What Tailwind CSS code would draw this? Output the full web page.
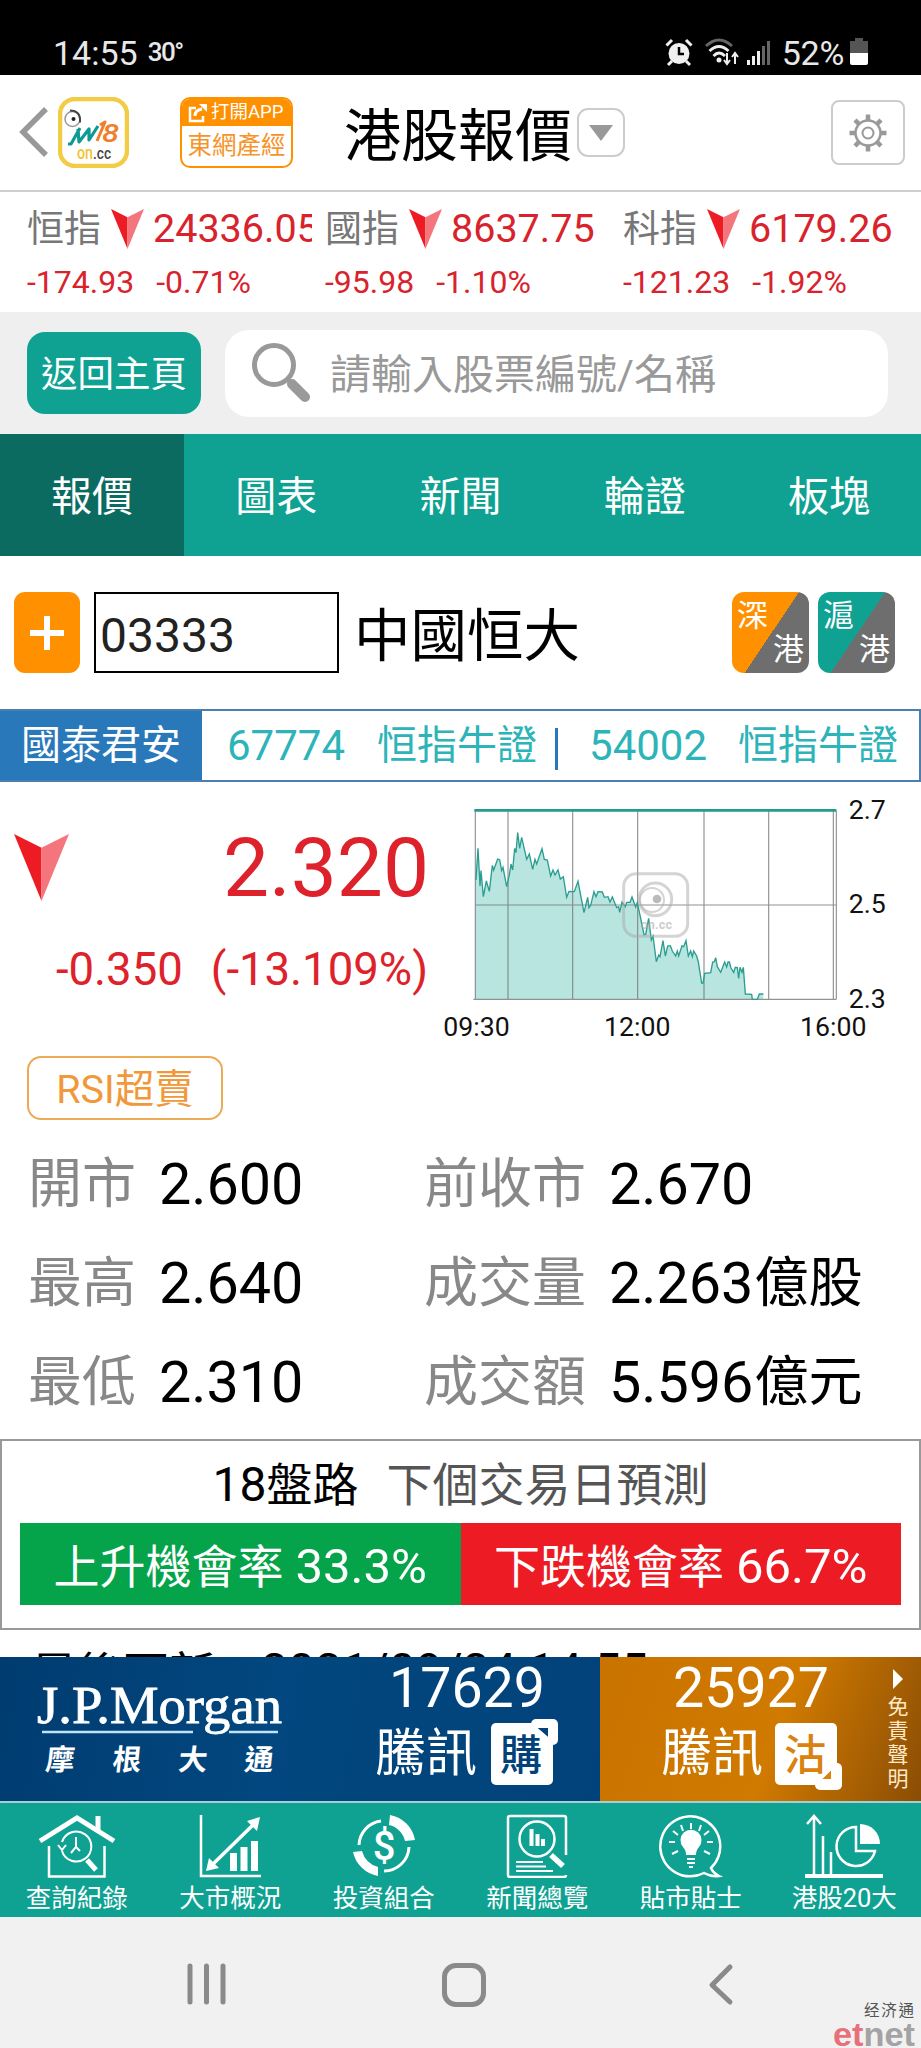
<!DOCTYPE html>
<html lang="zh-Hant">
  <head>
    <meta charset="utf-8" />
    <title>港股報價</title>
    <script src="https://cdn.jsdelivr.net/npm/@tailwindcss/browser@4"></script>
  </head>
  <body class="bg-white">
    <div
      class="relative w-[921px] h-[2048px] overflow-hidden flex flex-col whitespace-nowrap leading-none text-black font-['Roboto','Noto_Sans_CJK_TC',sans-serif]"
    >
      <!-- Status bar -->
      <div class="h-[75px] shrink-0 bg-black text-[#e8e8e8] flex items-start pt-9 pl-[53px] pr-[53px]">
        <span class="text-[34px]">14:55</span>
        <span class="ml-2.5 mt-[3px] text-[26px] font-medium tracking-[-1.5px]">30°</span>
        <div class="ml-auto flex items-start">
          <svg class="w-7 h-8 mt-0.5" viewBox="0 0 28 32">
            <circle cx="14" cy="15.500" r="10.500" fill="#f0f0f0" />
            <path d="M14 9v7h5" fill="none" stroke="#000" stroke-width="2.500" />
            <path d="M1.500 7.500L7 2M26.500 7.500L21 2M7 23l-4 4M21 23l4 4" stroke="#f0f0f0" stroke-width="3" />
          </svg>
          <svg class="w-9 h-8 ml-3 mt-0.5" viewBox="0 0 36 32" fill="none" stroke-width="2.800">
            <path d="M1 8Q14-4 27 8" stroke="#666" />
            <path d="M4.500 13Q14 4 23.500 13M8.500 18Q14 12 20 18" stroke="#eee" />
            <circle cx="14" cy="22" r="2.500" fill="#eee" />
            <path d="M22 15v10M19 22l3 4 3-4M30 26V16M27 19l3-4 3 4" stroke="#eee" stroke-width="2" />
          </svg>
          <svg class="w-6 h-8 ml-1.5 mt-0.5" viewBox="0 0 24 32">
            <path d="M0 22h3v5H0zM5 18h3v9H5zM10 13h3v14h-3z" fill="#eee" />
            <path d="M15 8h3v19h-3zM20 3h3v24h-3z" fill="#666" />
          </svg>
          <span class="ml-[11px] text-[34px] tracking-[-0.3px]">52%</span>
          <svg class="w-[18px] h-8 ml-1.5 mt-0.5" viewBox="0 0 18 32">
            <path d="M5 0h8v3h5v13H0V3h5z" fill="#555" />
            <path d="M0 15h18v10q0 2-2 2H2q-2 0-2-2z" fill="#fff" />
          </svg>
        </div>
      </div>

      <!-- Header -->
      <div class="h-[117px] shrink-0 border-b-2 border-[#cfcfcf] flex items-start pt-[22px] pl-[18px] pr-4">
        <svg class="w-[30px] h-[50px] mt-[10px]" viewBox="0 0 30 50" fill="none" stroke="#999" stroke-width="5.500">
          <path d="M28 2L5 25l23 23" />
        </svg>
        <svg class="w-[71px] h-[71px] ml-[10px]" viewBox="0 0 71 71">
          <rect x="2" y="2" width="67" height="67" rx="15" fill="#fff" stroke="#f3cc45" stroke-width="4.500" />
          <circle cx="14.500" cy="22" r="7.500" fill="#fff" stroke="#999" stroke-width="1.500" />
          <path d="M12 13.500q11 0 10 12" fill="none" stroke="#444" stroke-width="2" />
          <circle cx="15.500" cy="22" r="2" fill="#222" />
          <path d="M10 47h3L22 31M20 32l1 13L31 32l0 11 9-14" fill="none" stroke="#0d9a94" stroke-width="3.200" stroke-linejoin="round" />
          <path d="M39 44l8-19-5 3" fill="none" stroke="#f07e2c" stroke-width="3" stroke-linejoin="round" />
          <text x="44" y="45" font-size="26" font-style="italic" font-weight="500" fill="#f07e2c" textLength="17" lengthAdjust="spacingAndGlyphs">8</text>
          <text x="19" y="62" font-size="18" font-weight="500" fill="#f0c435" textLength="16" lengthAdjust="spacingAndGlyphs">on</text>
          <text x="35" y="62" font-size="16" font-weight="500" fill="#444" textLength="18" lengthAdjust="spacingAndGlyphs">.cc</text>
        </svg>
        <div class="ml-[51px] w-[113px] h-[71px] rounded-[10px] border-2 border-[#ff9000] overflow-hidden flex flex-col">
          <div class="h-[27px] bg-[#ff9000] text-white text-[18.500px] flex items-center pl-1.5 gap-[3px]">
            <svg class="w-5 h-5" viewBox="0 0 20 20" fill="none" stroke="#fff" stroke-width="2.500">
              <path d="M8 5H2v13h13v-5" />
              <path d="M7 13q0-6 7-7" stroke-width="3" />
              <path d="M11 1h8v8z" fill="#fff" stroke="none" />
            </svg>
            <span>打開APP</span>
          </div>
          <div class="flex-1 flex items-center justify-center text-[24.500px] text-[#f5942a]">東網產經</div>
        </div>
        <div class="ml-[51px] mt-[11px] text-[57px]">港股報價</div>
        <div class="ml-[5px] mt-[11px] w-[48px] h-[49px] rounded-[11px] border-2 border-[#ccc] flex items-center justify-center">
          <svg class="w-6 h-4" viewBox="0 0 24 16"><path d="M0 0h24L12 16z" fill="#999" /></svg>
        </div>
        <div class="ml-auto mt-[3px] w-[74px] h-[65px] rounded-lg border-2 border-[#ccc] flex items-center justify-center">
          <svg class="w-10 h-10" viewBox="0 0 40 40" fill="none" stroke="#999">
            <circle cx="20" cy="20" r="12.500" stroke-width="2.500" />
            <circle cx="20" cy="20" r="5.500" stroke-width="2" />
            <path d="M20 7V1.500M20 33v5.500M7 20H1.500M33 20h5.500M10.800 10.800L7 7M29.200 29.200L33 33M29.200 10.800L33 7M10.800 29.200L7 33" stroke-width="4.500" />
          </svg>
        </div>
      </div>

      <!-- Index ticker -->
      <div class="h-[120px] shrink-0 flex gap-[13px] pl-[27px] text-[#d8232c]">
        <div class="w-[285px] overflow-hidden">
          <div class="flex h-[46px] mt-[14px] items-center">
            <span class="text-[37px] text-[#777]">恒指</span>
            <svg class="w-[33px] h-[42px] ml-2.5 shrink-0" viewBox="0 0 56 68"><path d="M0 0l28 14v54z" fill="#ed1c24" /><path d="M56 0L28 14v54z" fill="#f4767c" /></svg>
            <span class="ml-[9px] text-[39.500px]">24336.05</span>
          </div>
          <div class="mt-[14px] text-[32px] flex gap-[22px]"><span>-174.93</span><span>-0.71%</span></div>
        </div>
        <div class="w-[285px] overflow-hidden">
          <div class="flex h-[46px] mt-[14px] items-center">
            <span class="text-[37px] text-[#777]">國指</span>
            <svg class="w-[33px] h-[42px] ml-2.5 shrink-0" viewBox="0 0 56 68"><path d="M0 0l28 14v54z" fill="#ed1c24" /><path d="M56 0L28 14v54z" fill="#f4767c" /></svg>
            <span class="ml-[9px] text-[39.500px]">8637.75</span>
          </div>
          <div class="mt-[14px] text-[32px] flex gap-[22px]"><span>-95.98</span><span>-1.10%</span></div>
        </div>
        <div class="w-[285px] overflow-hidden">
          <div class="flex h-[46px] mt-[14px] items-center">
            <span class="text-[37px] text-[#777]">科指</span>
            <svg class="w-[33px] h-[42px] ml-2.5 shrink-0" viewBox="0 0 56 68"><path d="M0 0l28 14v54z" fill="#ed1c24" /><path d="M56 0L28 14v54z" fill="#f4767c" /></svg>
            <span class="ml-[9px] text-[39.500px]">6179.26</span>
          </div>
          <div class="mt-[14px] text-[32px] flex gap-[22px]"><span>-121.23</span><span>-1.92%</span></div>
        </div>
      </div>

      <!-- Search -->
      <div class="h-[122px] shrink-0 bg-[#efefef] flex items-center pl-[27px]">
        <div class="w-[174px] h-[82px] rounded-[18px] bg-[#0fa292] text-white text-[36.500px] pt-1 flex items-center justify-center">返回主頁</div>
        <div class="ml-6 w-[663px] h-[87px] rounded-[24px] bg-white flex items-center pl-[26px] text-[#999]">
          <svg class="w-[61px] h-[60px]" viewBox="0 0 61 60" fill="none" stroke="#999">
            <circle cx="23" cy="22" r="19.500" stroke-width="5" />
            <path d="M41 41l13 13" stroke-width="10" stroke-linecap="round" />
          </svg>
          <span class="ml-[18px] mt-[5px] text-[41px]">請輸入股票編號/名稱</span>
        </div>
      </div>

      <!-- Tabs -->
      <div class="h-[122px] shrink-0 bg-[#0fa292] text-white text-[41px] grid grid-cols-5">
        <div class="bg-[#0b6b61] pt-[5px] flex items-center justify-center">報價</div>
        <div class="pt-[5px] flex items-center justify-center">圖表</div>
        <div class="pt-[5px] flex items-center justify-center">新聞</div>
        <div class="pt-[5px] flex items-center justify-center">輪證</div>
        <div class="pt-[5px] flex items-center justify-center">板塊</div>
      </div>

      <!-- Stock code -->
      <div class="h-[153px] shrink-0 flex items-center pl-[14px] pr-[26px]">
        <div class="w-[66px] h-[81px] rounded-[11px] bg-[#ff9000] flex items-center justify-center">
          <svg class="w-[34px] h-[34px]" viewBox="0 0 34 34"><path d="M17 0v34M0 17h34" stroke="#fff" stroke-width="6" /></svg>
        </div>
        <div class="ml-[14px] w-[245px] h-[81px] border-2 border-black flex items-center pl-1 pt-1.5 text-[48px] text-[#222]">03333</div>
        <div class="ml-[15px] mt-[9px] text-[56.500px]">中國恒大</div>
        <div class="ml-auto flex gap-[9px] text-white text-[31px]">
          <div class="w-[77px] h-[81px] rounded-xl bg-linear-[124deg,#ff9000_51%,#6e6e6e_51%] flex flex-col justify-between px-[5px] py-2">
            <span>深</span><span class="self-end">港</span>
          </div>
          <div class="w-[77px] h-[81px] rounded-xl bg-linear-[124deg,#0fa292_51%,#6e6e6e_51%] flex flex-col justify-between px-[5px] py-2">
            <span>滬</span><span class="self-end">港</span>
          </div>
        </div>
      </div>

      <!-- Sponsored strip -->
      <div class="h-[73px] shrink-0 border-2 border-l-0 border-[#4a7faf] flex items-center text-[40px] text-[#2cb4b8]">
        <div class="w-[202px] h-full bg-[#2878ba] text-white flex items-center justify-center">國泰君安</div>
        <span class="ml-[25px] text-[42px]">67774</span>
        <span class="ml-[32px]">恒指牛證</span>
        <span class="ml-[18px] w-[3px] h-[42px] mt-1.5 bg-[#2878ba]"></span>
        <span class="ml-[31px] text-[42px]">54002</span>
        <span class="ml-[31px]">恒指牛證</span>
      </div>

      <!-- Price and intraday chart -->
      <div class="h-[274px] shrink-0 flex text-[#dd222b]">
        <div class="w-[430px]">
          <div class="flex justify-between h-[118px] pl-[14px] pr-[1px] pt-[45px]">
            <svg class="w-[55px] h-[67px] mt-[7px]" viewBox="0 0 56 68"><path d="M0 0l28 14v54z" fill="#ed1c24" /><path d="M56 0L28 14v54z" fill="#f4767c" /></svg>
            <span class="text-[82px]">2.320</span>
          </div>
          <div class="mt-[46px] pt-px pr-[2px] h-[46px] flex gap-[28px] justify-end text-[45.500px]"><span>-0.350</span><span>(-13.109%)</span></div>
          <div class="ml-[27px] mt-[64px] w-[196px] h-[64px] rounded-[14px] border-2 border-[#edaa55] text-[#f0983a] text-[39.500px] pt-[3px] flex items-center justify-center">RSI超賣</div>
        </div>
        <svg class="w-[491px] h-[280px]" viewBox="0 6 1473 840">
          <path d="M136 658V300L144 205L150 318L153 272L160 350L169 303L178 334L187 256L191 270L203 237L209 239L215 272L219 262L230 320L238 285L243 252L248 270L254 205L258 218L263 158L269 205L275 172L290 238L298 222L308 268L315 238L320 252L336 206L343 238L352 240L362 288L369 270L375 285L384 270L391 297L400 290L410 352L417 334L433 335L444 304L462 398L473 352L477 383L482 376L492 335L498 350L504 335L517 336L523 352L534 350L540 366L547 351L560 383L566 380L569 397L576 366L586 380L590 367L600 367L606 351L617 381L622 367L632 415L642 464L647 463L656 415L664 480L669 468L679 545L686 525L690 530L699 482L706 528L713 498L721 497L727 513L737 528L742 513L746 528L756 498L761 500L768 482L775 528L782 513L787 530L791 513L800 528L805 546L810 578L815 609L819 609L824 580L842 578L848 546L853 545L857 533L862 560L872 577L884 546L890 561L894 546L898 546L903 564L911 577L916 562L922 563L926 595L930 562L936 577L940 562L946 642L965 643L967 658L982 658L988 642L1000 642V658Z" fill="#b8e5df" />
          <g fill="none" stroke="#777" stroke-opacity=".8" stroke-width="3.500">
            <path d="M234 92V658M428 92V658M623 92V658M822 92V658M1016 92V658M1210 92V658M1219 92V658M136 92V658M136 375H1219M130 658H1219" />
          </g>
          <path d="M138 300L144 205L150 318L153 272L160 350L169 303L178 334L187 256L191 270L203 237L209 239L215 272L219 262L230 320L238 285L243 252L248 270L254 205L258 218L263 158L269 205L275 172L290 238L298 222L308 268L315 238L320 252L336 206L343 238L352 240L362 288L369 270L375 285L384 270L391 297L400 290L410 352L417 334L433 335L444 304L462 398L473 352L477 383L482 376L492 335L498 350L504 335L517 336L523 352L534 350L540 366L547 351L560 383L566 380L569 397L576 366L586 380L590 367L600 367L606 351L617 381L622 367L632 415L642 464L647 463L656 415L664 480L669 468L679 545L686 525L690 530L699 482L706 528L713 498L721 497L727 513L737 528L742 513L746 528L756 498L761 500L768 482L775 528L782 513L787 530L791 513L800 528L805 546L810 578L815 609L819 609L824 580L842 578L848 546L853 545L857 533L862 560L872 577L884 546L890 561L894 546L898 546L903 564L911 577L916 562L922 563L926 595L930 562L936 577L940 562L946 642L965 643L967 658L982 658L988 642L1000 642" fill="none" stroke="#2b9d91" stroke-width="4" />
          <path d="M133 91H1219" stroke="#259a8e" stroke-width="8" />
          <!-- on.cc mark over the plot -->
          <g fill="none" stroke="#aaa" stroke-opacity=".5">
            <rect x="581" y="281" width="192" height="188" rx="38" stroke-width="9" />
            <circle cx="676" cy="358" r="49" stroke-width="9" />
            <circle cx="666" cy="360" r="36" stroke-width="6" />
            <circle cx="681" cy="357" r="13" fill="#aaa" fill-opacity=".8" stroke="none" />
          </g>
          <text x="632" y="447" font-size="38" font-weight="700" fill="#aaa" fill-opacity=".6" textLength="94">on.cc</text>
          <g font-size="80" fill="#111">
            <text x="1256" y="116">2.7</text>
            <text x="1256" y="400">2.5</text>
            <text x="1256" y="684">2.3</text>
            <text x="40" y="768">09:30</text>
            <text x="522" y="768">12:00</text>
            <text x="1110" y="768">16:00</text>
          </g>
        </svg>
      </div>

      <!-- Day figures -->
      <div class="h-[383px] shrink-0 pt-[79px] pl-7 flex flex-col text-[54px]">
        <div class="flex h-[99px] items-center">
          <span class="w-[131px] text-[#888]">開市</span><span class="w-[265px] text-[57.500px]">2.600</span>
          <span class="w-[185px] text-[#888]">前收市</span><span class="text-[57.500px]">2.670</span>
        </div>
        <div class="flex h-[99px] items-center">
          <span class="w-[131px] text-[#888]">最高</span><span class="w-[265px] text-[57.500px]">2.640</span>
          <span class="w-[185px] text-[#888]">成交量</span><span class="text-[57.500px]">2.263</span><span class="ml-px">億股</span>
        </div>
        <div class="flex h-[99px] items-center">
          <span class="w-[131px] text-[#888]">最低</span><span class="w-[265px] text-[57.500px]">2.310</span>
          <span class="w-[185px] text-[#888]">成交額</span><span class="text-[57.500px]">5.596</span><span class="ml-px">億元</span>
        </div>
      </div>

      <!-- Forecast -->
      <div class="h-[191px] shrink-0 border-2 border-[#999] px-[18px] pt-[21px] text-[46px]">
        <div class="h-[46px] flex items-center justify-center"><span class="text-[48px]">18</span><span>盤路</span><span class="ml-7 text-[#555]">下個交易日預測</span></div>
        <div class="mt-[15px] h-[82px] grid grid-cols-2 text-white">
          <div class="bg-[#05a44a] pt-[5px] flex items-center justify-center gap-3"><span>上升機會率</span><span class="text-[49px]">33.3%</span></div>
          <div class="bg-[#ed1c24] pt-[5px] flex items-center justify-center gap-3"><span>下跌機會率</span><span class="text-[49px]">66.7%</span></div>
        </div>
      </div>

      <!-- Last update, running under the ad -->
      <div class="h-[27px] shrink-0 overflow-hidden pt-[21px] pl-[31px] flex items-start text-[46px]">
        <span>最後更新：</span><span class="-mt-1 text-[48px]">2021/09/24 14:55</span>
      </div>

      <!-- Warrant ad -->
      <div class="h-[144px] shrink-0 flex text-white">
        <div class="w-[600px] bg-linear-[100deg,#003c70,#02477f_45%,#02427a] flex">
          <svg class="w-[340px] h-[144px]" viewBox="0 0 340 144">
            <text x="37" y="66" font-family="Liberation Serif" font-size="52" fill="#fff" stroke="#fff" stroke-width=".8" textLength="245" lengthAdjust="spacingAndGlyphs">J.P.Morgan</text>
            <path d="M42 75h151M229 75h49" stroke="#bfe3fa" stroke-width="2.500" />
            <g font-family="Noto Sans CJK TC" font-weight="700" font-size="29" fill="#fff" text-anchor="middle" transform="skewX(-6)">
              <text x="71" y="113">摩</text><text x="138" y="113">根</text><text x="204" y="113">大</text><text x="270" y="113">通</text>
            </g>
          </svg>
          <div class="w-[260px] flex flex-col pl-[35px]">
            <span class="ml-3.5 mt-1 text-[55.500px]">17629</span>
            <div class="flex items-start mt-[2px]">
              <span class="mt-[9px] text-[51px]">騰訊</span>
              <svg class="ml-[14px] w-[68px] h-[72px]" viewBox="0 0 68 72">
                <rect x="0" y="4" width="62" height="62" rx="5" fill="#fff" />
                <rect x="40" y="0" width="27" height="26" rx="5" fill="#fff" />
                <text x="9" y="51" font-size="42" font-weight="500" fill="#02427a">購</text>
                <path d="M44 8h14v12z" fill="#02427a" stroke="#fff" stroke-width="2" />
              </svg>
            </div>
          </div>
        </div>
        <div class="w-[321px] bg-linear-[110deg,#c97300,#d07a00_55%,#8a4d05] flex">
          <div class="w-[286px] flex flex-col pl-[61px]">
            <span class="ml-[12px] mt-1 text-[55.500px]">25927</span>
            <div class="flex items-start mt-[2px]">
              <span class="mt-[9px] text-[51px]">騰訊</span>
              <svg class="ml-[12px] w-[68px] h-[72px]" viewBox="0 0 68 72">
                <rect x="0" y="4" width="62" height="62" rx="5" fill="#fff" />
                <rect x="40" y="44" width="27" height="27" rx="5" fill="#fff" />
                <text x="9" y="51" font-size="42" font-weight="500" fill="#d98210">沽</text>
                <path d="M45 61l12-12v12z" fill="#d98210" stroke="#fff" stroke-width="2" />
              </svg>
            </div>
          </div>
          <div class="flex flex-col items-center w-[24px] pt-[12px] text-[21px] leading-6 text-[#ffe9c8]">
            <svg class="w-2.5 h-5 mb-1.5" viewBox="0 0 10 20"><path d="M0 0l10 10L0 20z" fill="#fff" /></svg>
            <span>免</span><span>責</span><span>聲</span><span>明</span>
          </div>
        </div>
      </div>

      <!-- Bottom menu -->
      <div class="h-[116px] shrink-0 border-t-2 border-[#a5cfd3] bg-[#0fa292] text-white text-[25.500px] grid grid-cols-6">
        <div class="flex flex-col items-center pt-[9px]">
          <svg class="w-20 h-[66px]" viewBox="0 0 80 66" fill="none" stroke="#fff" stroke-width="2.500">
            <path d="M3 29L40 6l37 23" stroke-width="5" />
            <path d="M61 18V4" stroke-width="5" />
            <path d="M12 34v30.500h55.500V34" />
            <path d="M25 30a15 15 0 1 1 0 9M21 33l4 5 4-5" stroke-width="2" />
            <path d="M39 25v10l-5 6M39 35l4 4" stroke-width="2" />
            <path d="M50 48l9 10" stroke-width="5" />
          </svg>
          <span class="mt-2">查詢紀錄</span>
        </div>
        <div class="flex flex-col items-center pt-[9px]">
          <svg class="w-20 h-[66px]" viewBox="0 0 80 66" fill="none" stroke="#fff" stroke-width="2.500">
            <path d="M11 3v61h60" />
            <path d="M22 53L64 12" stroke-width="3.500" />
            <path d="M70 5l-3 14-10-10zM16 59l3-13 10 10z" fill="#fff" stroke="none" />
            <path d="M40 41h7v18h-7zM50.500 35h7v24h-7zM61 29h7v30h-7z" fill="#fff" stroke="none" />
          </svg>
          <span class="mt-2">大市概況</span>
        </div>
        <div class="flex flex-col items-center pt-[9px]">
          <svg class="w-20 h-[66px]" viewBox="0 0 80 66" fill="none" stroke="#fff">
            <path d="M37 9A25 25 0 0 0 15 33M40 59A25 25 0 0 0 65 35" stroke-width="3" />
            <path d="M46 3A31 31 0 0 1 71 28L61 29A21 21 0 0 0 45 13ZM34 64A31 31 0 0 1 9 40L18 39A22 22 0 0 0 34 55Z" fill="#fff" stroke="none" />
            <text x="40" y="48" text-anchor="middle" font-size="40" font-weight="500" fill="#fff" stroke="none">$</text>
          </svg>
          <span class="mt-2">投資組合</span>
        </div>
        <div class="flex flex-col items-center pt-[9px]">
          <svg class="w-20 h-[66px]" viewBox="0 0 80 66" fill="none" stroke="#fff" stroke-width="2.500">
            <path d="M69 43V6q0-2-2-2H13q-2 0-2 2v57q0 2 2 2h54q2 0 2-2" />
            <circle cx="40" cy="27" r="17.500" />
            <path d="M34.500 17v17M40.500 22v12M46 27v7" stroke-width="4" />
            <path d="M54 43l12 11" stroke-width="5.500" />
            <path d="M19 50h27M19 54.500h30M19 59h37" stroke-width="1.800" />
          </svg>
          <span class="mt-2">新聞總覽</span>
        </div>
        <div class="flex flex-col items-center pt-[9px]">
          <svg class="w-20 h-[66px]" viewBox="0 0 80 66" fill="none" stroke="#fff" stroke-width="2.500">
            <path d="M60 56A30 30 0 1 0 53 61Q60 65 68 64Q62 61 60 56Z" />
            <path d="M35 43q0-5-3-8a10.500 10.500 0 1 1 16 0q-3 3-3 8z" fill="#fff" stroke="none" />
            <path d="M36 47h8M36 51h8M38 55h4" stroke-width="2" />
            <path d="M40 11v6M30 13l2 6M50 13l-2 6M22 19l5 4M58 19l-5 4M18 30h6M56 30h6M21 42l6-3M59 42l-6-3" stroke-width="2" />
          </svg>
          <span class="mt-2">貼市貼士</span>
        </div>
        <div class="flex flex-col items-center pt-[9px]">
          <svg class="w-20 h-[66px]" viewBox="0 0 80 66" fill="none" stroke="#fff" stroke-width="2.500">
            <path d="M1 64h78" stroke-width="4" />
            <path d="M10 64V5M3 12l7-8 7 8M19 64V24M27 64V40" />
            <path d="M52 15a19.500 19.500 0 1 0 19 24H52z" />
            <path d="M56 12v20h20A20 20 0 0 0 56 12z" fill="#fff" stroke="none" />
          </svg>
          <span class="mt-2">港股20大</span>
        </div>
      </div>

      <!-- System navigation -->
      <div class="flex-1 bg-[#f1f1f1] flex items-start pt-[46px] pl-[187px]">
        <svg class="w-[39px] h-[42px]" viewBox="0 0 39 42"><path d="M3 3v36M19.500 3v36M36 3v36" stroke="#8a8a8a" stroke-width="5" stroke-linecap="round" /></svg>
        <div class="ml-[216px] w-[44px] h-[44px] rounded-[14px] border-[5px] border-[#8a8a8a]"></div>
        <svg class="ml-[222px] w-[26px] h-[44px]" viewBox="0 0 26 44" fill="none"><path d="M22 4L4 22l18 17" stroke="#8a8a8a" stroke-width="5" stroke-linecap="round" stroke-linejoin="round" /></svg>
      </div>

      <!-- etnet mark -->
      <div class="absolute right-1 bottom-0 w-[84px] h-[50px]">
        <svg class="w-full h-full" viewBox="0 0 84 50">
          <text x="31" y="18" font-family="Noto Sans CJK SC" font-size="15.500" fill="#555" textLength="50">经济通</text>
          <text x="0" y="48" font-family="Liberation Sans" font-weight="700" font-size="34" textLength="82" lengthAdjust="spacingAndGlyphs" fill="#a3a3a3"><tspan fill="#e8707a">et</tspan>net</text>
        </svg>
      </div>
    </div>
  </body>
</html>
